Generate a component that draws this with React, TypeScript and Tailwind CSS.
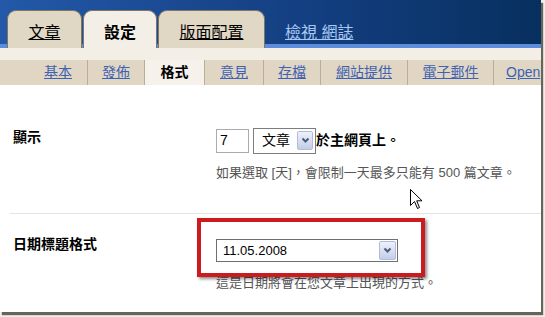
import React from "react";

const Chevron = () => (
  <svg width="9" height="7" viewBox="0 0 9 7">
    <path d="M1.5 1.5 L4.5 4.5 L7.5 1.5" fill="none" stroke="#4a5a80" strokeWidth="2" />
  </svg>
);

const DropBtn = ({ w, h }: { w: string; h: string }) => (
  <div
    className={`${w} ${h} flex items-center justify-center rounded-[2px] border border-[#b0bcda] bg-[linear-gradient(to_bottom,#eef2fb,#c3cde6)]`}
  >
    <Chevron />
  </div>
);

export default function App() {
  const subtabs = [
    { t: "基本", w: "w-[58px]" },
    { t: "發佈", w: "w-[56px]" },
    { t: "格式", w: "w-[59px]", active: true },
    { t: "意見", w: "w-[58px]" },
    { t: "存檔", w: "w-[56px]" },
    { t: "網站提供", w: "w-[86px]" },
    { t: "電子郵件", w: "w-[85px]" },
  ];
  return (
    <div className="w-[545px] h-[317px] bg-[#efefea] overflow-hidden font-['Liberation_Sans','Noto_Sans_CJK_TC',sans-serif]">
      <div className="w-[541px] h-[312px] bg-white shadow-[2px_3px_1px_#66655a] flex flex-col relative">
        {/* header */}
        <div className="h-[48px] shrink-0 flex items-end pl-[7px] bg-[linear-gradient(to_bottom,transparent_44px,#5b8ddc_44px),linear-gradient(to_right,#2359a8,#143f82_55%,#07305f)]">
          <div className="w-[75px] h-[38px] rounded-t-[9px] border border-b-0 border-[#7e7664] bg-[#e1d7c5] flex justify-center pt-[13px]">
            <span className="text-[16px] leading-[18px] underline text-black">文章</span>
          </div>
          <div className="ml-[1px] w-[74px] h-[38px] rounded-t-[9px] border border-b-0 border-[#7e7664] bg-[#f4efe6] flex justify-center pt-[13px]">
            <span className="text-[16px] leading-[18px] font-bold text-black">設定</span>
          </div>
          <div className="ml-[1px] w-[107px] h-[38px] rounded-t-[9px] border border-b-0 border-[#7e7664] bg-[#e1d7c5] flex justify-center pt-[13px]">
            <span className="text-[16px] leading-[18px] underline text-black">版面配置</span>
          </div>
          <span className="ml-[20px] mb-[6px] text-[16px] leading-[18px] underline text-[#a9c9f2]">
            檢視 網誌
          </span>
        </div>
        <div className="h-[12px] shrink-0 bg-[#f4efe6]" />
        {/* subtabs */}
        <div className="h-[25px] shrink-0 bg-[#e1d6c3] flex pl-[29px] overflow-hidden">
          {subtabs.map((s) => (
            <React.Fragment key={s.t}>
              <div
                className={`${s.w} shrink-0 h-full flex items-center justify-center text-[14px] ${
                  s.active ? "bg-[#f6f2eb] font-bold text-black" : "text-[#3d62b3] underline"
                }`}
              >
                {s.t}
              </div>
              <div className="w-[1px] shrink-0 h-full bg-[#b9ad98]" />
            </React.Fragment>
          ))}
          <div className="pl-[12px] h-full flex items-center text-[14px] text-[#3d62b3] underline whitespace-nowrap">
            Open
          </div>
        </div>
        {/* content */}
        <div className="flex-1 pl-[10px]">
          <div className="grid grid-cols-[206px_1fr] pt-[42px] pb-[31px] border-b border-[#e4e4e4]">
            <div className="pl-[3px] text-[14px] leading-[20px] font-bold text-black">顯示</div>
            <div>
              <div className="flex items-center h-[27px]">
                <div className="w-[33px] h-[24px] border border-[#a7acb3] bg-white flex items-center pl-[3px] text-[14px] text-black">
                  7
                </div>
                <div className="ml-[4px] w-[63px] h-[26px] border border-[#7d7d7d] bg-white flex items-center justify-between pl-[8px] pr-[2px]">
                  <span className="text-[14px] text-black">文章</span>
                  <DropBtn w="w-[16px]" h="h-[19px]" />
                </div>
                <span className="text-[14px] font-bold text-black">於主網頁上。</span>
              </div>
              <div className="mt-[10px] text-[13px] leading-[18px] text-[#555555] whitespace-nowrap">
                如果選取 [天]，會限制一天最多只能有 500 篇文章。
              </div>
            </div>
          </div>
          <div className="grid grid-cols-[206px_1fr] pt-[25px]">
            <div className="pl-[3px] -mt-[5px] text-[14px] leading-[20px] font-bold text-black">日期標題格式</div>
            <div>
              <div className="w-[182px] h-[23px] border border-[#6f6f6f] bg-white flex items-center justify-between pl-[6px] pr-[1px]">
                <span className="text-[13px] text-black">11.05.2008</span>
                <DropBtn w="w-[17px]" h="h-[19px]" />
              </div>
              <div className="mt-[12px] text-[13px] leading-[18px] text-[#555555] whitespace-nowrap">
                這是日期將會在您文章上出現的方式。
              </div>
            </div>
          </div>
        </div>
        {/* annotation box */}
        <div className="absolute left-[197px] top-[218px] w-[228px] h-[59px] border-[4px] border-[#cc1b1f] shadow-[2px_2px_3px_rgba(0,0,0,0.45)]" />
        {/* mouse cursor */}
        <svg className="absolute left-[410px] top-[189px]" width="13" height="21" viewBox="0 0 13 21">
          <path
            d="M0.5 0.5 L0.5 16.5 L4.5 12.5 L7.5 19.5 L9.5 18.5 L6.7 11.8 L12 11.8 Z"
            fill="white"
            stroke="black"
            strokeWidth="1"
          />
        </svg>
      </div>
    </div>
  );
}
